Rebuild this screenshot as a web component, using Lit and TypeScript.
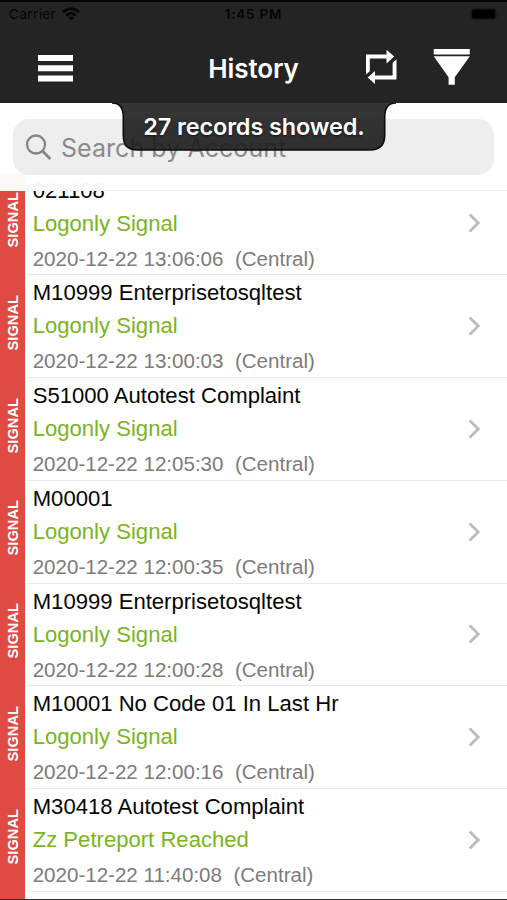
import { LitElement, html, css, svg } from "lit";
import { customElement, property } from "lit/decorators.js";

interface Entry { name: string; event: string; time: string; }

const entries: Entry[] = [
  { name: "021108", event: "Logonly Signal", time: "2020-12-22 13:06:06" },
  { name: "M10999 Enterprisetosqltest", event: "Logonly Signal", time: "2020-12-22 13:00:03" },
  { name: "S51000 Autotest Complaint", event: "Logonly Signal", time: "2020-12-22 12:05:30" },
  { name: "M00001", event: "Logonly Signal", time: "2020-12-22 12:00:35" },
  { name: "M10999 Enterprisetosqltest", event: "Logonly Signal", time: "2020-12-22 12:00:28" },
  { name: "M10001 No Code 01 In Last Hr", event: "Logonly Signal", time: "2020-12-22 12:00:16" },
  { name: "M30418 Autotest Complaint", event: "Zz Petreport Reached", time: "2020-12-22 11:40:08" },
];

@customElement("history-row")
class HistoryRow extends LitElement {
  @property({ attribute: false }) entry!: Entry;
  static styles = css`
    :host { display: flex; height: 102.75px; flex: none; font-family: "Liberation Sans", Arial, sans-serif; }
    .tag { width: 24.5px; flex: none; background: #df4a42; display: flex; align-items: center; justify-content: center; }
    .tag span { writing-mode: vertical-rl; transform: rotate(180deg); color: #fff; font-weight: bold; font-size: 14.7px; line-height: 16px; margin-bottom: 8px; margin-left: 2px; }
    .body { flex: 1; display: flex; align-items: center; border-bottom: 1.5px solid #e9e9e9; margin-left: 2px; padding-left: 6.2px; box-sizing: border-box; }
    .text { flex: 1; align-self: flex-start; padding-top: 1px; white-space: pre; font-size: 22.1px; line-height: 33px; color: #050505; }
    .event { color: #7ab51d; }
    .time { color: #7c7c7c; font-size: 20.55px; line-height: 37px; }
    svg { width: 14px; height: 22px; margin-right: 26px; flex: none; }
  `;
  render() {
    return html`<div class="tag"><span>SIGNAL</span></div>
      <div class="body">
        <div class="text"><div>${this.entry.name}</div><div class="event">${this.entry.event}</div><div class="time">${this.entry.time}  (Central)</div></div>
        <svg viewBox="0 0 14 22"><path d="M2.7 2.5 11.2 11 2.7 19.5" fill="none" stroke="#bcbcbe" stroke-width="2.8"/></svg>
      </div>`;
  }
}

const wifi = svg`<g fill="none" stroke="#050505" stroke-width="2.7"><path d="M1 5.2Q9-2 17 5.2"/><path d="M4.3 8.4Q9 4 13.7 8.4"/></g><path d="M6.3 10.6Q9 8.2 11.7 10.6L9 13.5Z" fill="#050505"/>`;

@customElement("app-root")
class AppRoot extends LitElement {
  static styles = css`
    :host { display: block; font-family: Inter, "Liberation Sans", sans-serif; }
    .screen { display: flex; flex-direction: column; width: 507px; height: 900px; box-sizing: border-box; overflow: hidden; background: #fff; border-bottom: 1px solid #333; }
    header { position: relative; z-index: 3; height: 103px; flex: none; box-sizing: border-box; border-top: 2px solid #050505; background: #242424; }
    .status { display: grid; grid-template-columns: 1fr auto 1fr; align-items: center; height: 24px; padding: 0 6px 0 9px; color: #050505; font-size: 13.5px; line-height: 24px; }
    .carrier { display: flex; align-items: center; gap: 6px; letter-spacing: .4px; }
    .clock { font-weight: 600; letter-spacing: .8px; margin-left: -3px; }
    .battery { justify-self: end; }
    .nav { display: grid; grid-template-columns: 1fr auto 1fr; align-items: center; height: 77px; padding: 0 37px; }
    h1 { margin: 8px 0 0; color: #fff; font-size: 26px; font-weight: 600; line-height: 36px; letter-spacing: -.1px; }
    .menu { width: 36px; height: 28px; margin-top: 6px; }
    .actions { justify-self: end; display: flex; gap: 36px; margin-top: 5px; }
    svg { display: block; }
    .search { position: relative; z-index: 1; flex: none; height: 88px; box-sizing: border-box; padding: 16px 13px 15px; background: rgba(255,255,255,.96); border-bottom: 1px solid #f0f0f0; }
    .field { display: flex; align-items: center; height: 56px; border-radius: 16px; background: #eeeeef; color: #8a8a8d; padding-left: 12px; gap: 9px; font-size: 25px; line-height: 56px; letter-spacing: .05px; white-space: nowrap; }
    .field span { padding-top: 1px; }
    .toast { position: absolute; z-index: 2; top: 101px; left: 112px; width: 284px; height: 52px; color: #fff; font-size: 23.5px; font-weight: 600; letter-spacing: -.13px; line-height: 47px; text-align: center; white-space: nowrap; }
    .toast svg { position: absolute; inset: 0; }
    .toast span { position: relative; text-shadow: 0 1px 2px #111; }
    .list { margin-top: -18.4px; flex: 1; display: flex; flex-direction: column; min-height: 0; overflow: hidden; }
    .next { flex: 1 0 auto; width: 24.5px; background: #df4a42; }
  `;
  render() {
    return html`<div class="screen">
      <header>
        <div class="status">
          <div class="carrier"><span>Carrier</span><svg width="18" height="14" viewBox="0 0 18 14">${wifi}</svg></div>
          <div class="clock">1:45 PM</div>
          <svg class="battery" width="31" height="12" viewBox="0 0 31 12"><rect x=".7" y=".5" width="26" height="11" rx="3" fill="#171717"/><rect x="2" y="1.5" width="23" height="9" rx="2" fill="#000"/><path d="M28 4Q30 6 28 8Z" fill="#111"/></svg>
        </div>
        <div class="nav">
          <svg class="menu" viewBox="0 0 36 28"><path d="M1 1h35v6H1zM1 11.3h35v6H1zM1 21.6h35v6H1z" fill="#fff"/></svg>
          <h1>History</h1>
          <div class="actions">
            <svg width="32" height="36" viewBox="0 0 32 36" fill="#fff"><path d="M1 25.5V5.5H21.5V.8L29.2 7.5 21.5 14.5V9.4H4.8V22.3Z"/><path d="M31.5 10.2V30.5H10V35L2.7 28.5 10 22V26.6H27.6V13.7Z"/></svg>
            <svg width="37" height="36" viewBox="0 0 37 36" fill="#fff"><path d="M.7 0H36.8V5.4H.7ZM.7 7.3H36.8L21.8 28.2V35.8H15.6V28.2Z"/></svg>
          </div>
        </div>
        <div class="toast">
          <svg width="284" height="52" viewBox="0 0 284 52"><defs><linearGradient id="g" x1="0" y1="0" x2="0" y2="1"><stop offset="0" stop-color="#242424" stop-opacity=".92"/><stop offset="1" stop-color="#1c1c1c" stop-opacity=".91"/></linearGradient></defs><path d="M0 0C8 0 11.3 5 11.3 14V32Q11.3 47 25 47H258Q272.7 47 272.7 32V14C272.7 5 276 0 284 0Z" fill="url(#g)"/><path d="M0 0C8 0 11.3 5 11.3 14V32Q11.3 47 25 47H258Q272.7 47 272.7 32V14C272.7 5 276 0 284 0" fill="none" stroke="#0c0c0c" stroke-width="1.6"/></svg>
          <span>27 records showed.</span>
        </div>
      </header>
      <div class="search"><div class="field">
        <svg width="27" height="28" viewBox="0 0 27 28" fill="none" stroke="#858588" stroke-width="2.3"><circle cx="11" cy="11.5" r="9"/><path d="M17.3 17.8 25.3 26" stroke-width="2.8"/></svg>
        <span>Search by Account</span>
      </div></div>
      <div class="list">${entries.map((e) => html`<history-row .entry=${e}></history-row>`)}<div class="next"></div></div>
    </div>`;
  }
}
